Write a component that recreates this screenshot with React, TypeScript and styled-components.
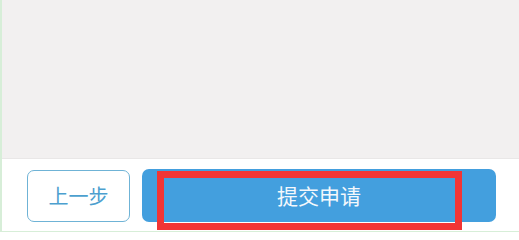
import styled, { createGlobalStyle } from "styled-components";

const GlobalStyle = createGlobalStyle`
  html, body {
    margin: 0;
    padding: 0;
    background: #ffffff;
  }
  body {
    font-family: "Noto Sans CJK SC", "Noto Sans", sans-serif;
  }
`;

const Screen = styled.div`
  width: 519px;
  height: 232px;
  box-sizing: border-box;
  border-left: 2px solid #d7eed8;
  display: flex;
  flex-direction: column;
  overflow: hidden;
`;

const Body = styled.div`
  height: 158px;
  background: #f2f0f0;
`;

const Footer = styled.div`
  position: relative;
  flex: 1;
  background: #ffffff;
  border-top: 1px solid #e9e7e7;
  border-bottom: 1px solid #d7eed8;
  display: flex;
  align-items: center;
  gap: 12px;
  padding: 0 23px 0 25px;
`;

const OutlineButton = styled.button`
  width: 103px;
  height: 52px;
  box-sizing: border-box;
  border: 1.5px solid #6fb3d6;
  border-radius: 7px;
  background: #ffffff;
  color: #4c9fcf;
  font-family: inherit;
  font-size: 20px;
  padding: 0;
  margin-top: 1px;
`;

const PrimaryButton = styled.button`
  flex: 1;
  height: 53px;
  border: none;
  border-radius: 7px;
  background: #439fde;
  color: #f4f8fc;
  font-family: inherit;
  font-size: 21px;
  padding: 0;
`;

const Highlight = styled.div`
  position: absolute;
  left: 155px;
  top: 12px;
  width: 305px;
  height: 59px;
  box-sizing: border-box;
  border: 7px solid #f23535;
  pointer-events: none;
`;

export default function App() {
  return (
    <>
      <GlobalStyle />
      <Screen>
        <Body />
        <Footer>
          <OutlineButton>上一步</OutlineButton>
          <PrimaryButton>提交申请</PrimaryButton>
          <Highlight />
        </Footer>
      </Screen>
    </>
  );
}
